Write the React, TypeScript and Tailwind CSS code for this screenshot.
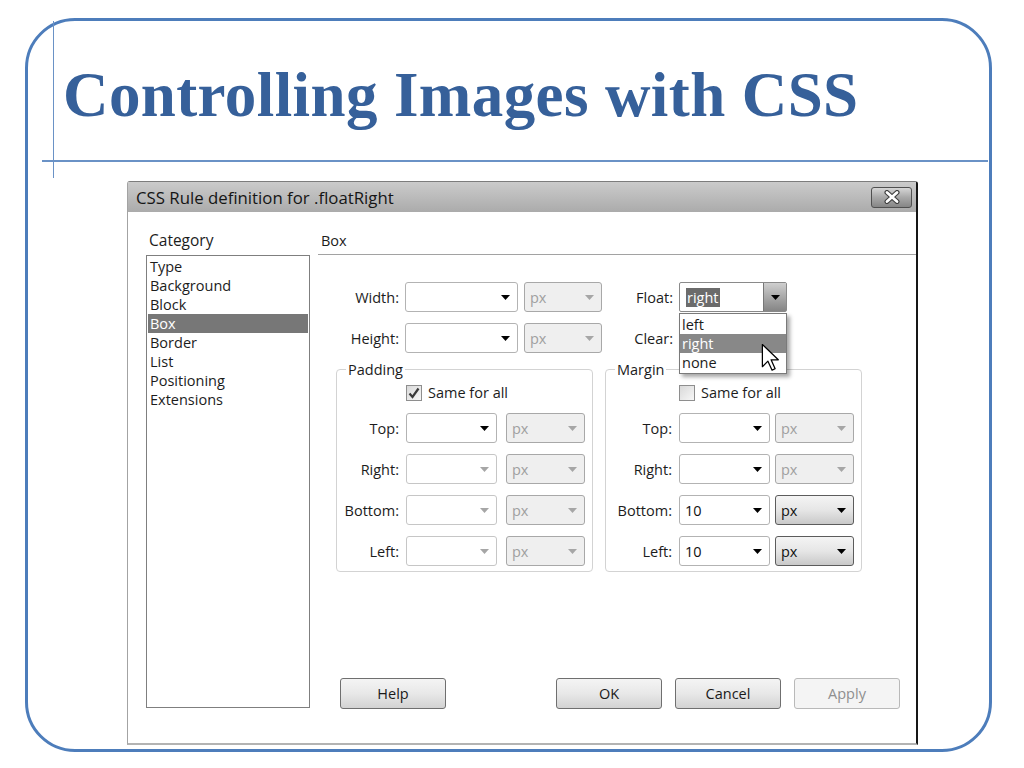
import { ReactNode } from 'react'
import { clsx } from 'clsx'

// ─── small pieces ─────────────────────────────────────────────────────────

function Arrow({ dim }: { dim?: boolean }) {
  return (
    <svg width="9" height="5" viewBox="0 0 9 5" className="shrink-0">
      <path d="M0 0h9L4.5 5z" fill={dim ? '#a6a6a6' : '#000'} />
    </svg>
  )
}

type Kind = 'open' | 'dim' | 'unit' | 'unitOn'

const kindStyles: Record<Kind, string> = {
  open: 'bg-white border-[#b3b3b3] text-[#111]',
  dim: 'bg-white border-[#c6c6c6] text-[#111]',
  unit: 'bg-[#efefef] border-[#a8a8a8] text-[#a0a0a0]',
  unitOn: 'bg-gradient-to-b from-[#f4f4f4] via-[#e6e6e6] to-[#c9c9c9] border-[#5c5c5c] text-[#111]',
}

function Combo({ kind, value, className }: { kind: Kind; value?: string; className: string }) {
  return (
    <div
      className={clsx(
        'flex h-[30px] shrink-0 items-center justify-between rounded-[3px] border pl-[5px] pr-[7px]',
        kindStyles[kind],
        className
      )}
    >
      <span>{value}</span>
      <Arrow dim={kind === 'dim' || kind === 'unit'} />
    </div>
  )
}

function Checkbox({ checked }: { checked?: boolean }) {
  return (
    <span className="flex h-[16px] w-[16px] items-center justify-center border border-[#8e8e8e] bg-gradient-to-br from-[#d9d9d9] to-[#f7f7f7]">
      {checked && (
        <svg width="12" height="12" viewBox="0 0 12 12">
          <path d="M1.5 6.5l3 3.5 6-8.5" fill="none" stroke="#3a3a3a" strokeWidth="2.2" />
        </svg>
      )}
    </span>
  )
}

function Btn({ children, disabled }: { children: ReactNode; disabled?: boolean }) {
  return (
    <div
      className={clsx(
        'flex h-[31px] w-[106px] items-center justify-center rounded-[3px] border',
        disabled
          ? 'border-[#b9b9b9] bg-[#f4f4f4] text-[#8f8f8f]'
          : 'border-[#6f6f6f] bg-gradient-to-b from-[#f4f4f4] via-[#e8e8e8] to-[#d2d2d2] text-[#1a1a1a]'
      )}
    >
      {children}
    </div>
  )
}

// ─── fieldset: Padding / Margin ───────────────────────────────────────────

interface SideRow {
  label: string
  kind: Kind
  value?: string
  unit: Kind
}

function SideBox({
  title,
  checked,
  rows,
  labelW,
  unitGap,
}: {
  title: string
  checked?: boolean
  rows: SideRow[]
  labelW: string
  unitGap: string
}) {
  return (
    <div className="relative h-[203px] w-[257px] rounded-[4px] border border-[#d3d3d3] pt-[13px]">
      <span className="absolute -top-[10px] left-[9px] bg-white px-[2px] leading-[19px]">{title}</span>
      <div className="flex h-[19px] items-center gap-[6px]">
        <span className={clsx('shrink-0', labelW)} />
        <span className="ml-[1px]">
          <Checkbox checked={checked} />
        </span>
        <span>Same for all</span>
      </div>
      <div className="mt-[11px] flex flex-col gap-[11px]">
        {rows.map(r => (
          <div key={r.label} className="flex items-center">
            <span className={clsx('shrink-0 text-right', labelW)}>{r.label}</span>
            <Combo kind={r.kind} value={r.value} className="ml-[7px] w-[91px]" />
            <Combo kind={r.unit} value="px" className={clsx('w-[79px]', unitGap)} />
          </div>
        ))}
      </div>
    </div>
  )
}

// ─── dialog ───────────────────────────────────────────────────────────────

const categories = ['Type', 'Background', 'Block', 'Box', 'Border', 'List', 'Positioning', 'Extensions']

function Dialog() {
  return (
    <div className="ml-[99px] mt-[54px] flex h-[564px] w-[791px] flex-col rounded-t-[3px] border-b-2 border-l border-r-2 border-t border-b-[#b3b3b3] border-l-[#a3a3a3] border-r-[#161616] border-t-[#7d7d7d] bg-white font-['Open_Sans',sans-serif] text-[14.5px] leading-[19px] text-[#1c1c1c]">
      {/* title bar */}
      <div className="flex h-[30px] items-center justify-between bg-gradient-to-b from-[#cbcbcb] to-[#ababab] pl-[8px] pr-[4px]">
        <span className="text-[16.8px] text-[#151515]">CSS Rule definition for .floatRight</span>
        <div className="flex h-[21px] w-[41px] items-center justify-center rounded-[3px] border border-[#505050] bg-gradient-to-b from-[#d6d6d6] via-[#a8a8a8] to-[#868686]">
          <svg width="20" height="14" viewBox="0 0 20 14">
            <path d="M5 2.5l10 9M15 2.5l-10 9" stroke="#3e3e3e" strokeWidth="5" strokeLinecap="round" />
            <path d="M5 2.5l10 9M15 2.5l-10 9" stroke="#fff" strokeWidth="2.8" strokeLinecap="round" />
          </svg>
        </div>
      </div>

      {/* body */}
      <div className="flex gap-[8px] pl-[18px] pt-[19px]">
        {/* category column */}
        <div className="w-[164px] shrink-0">
          <div className="pl-[3px] text-[15.5px]">Category</div>
          <div className="mt-[5px] h-[453px] border border-[#7f7f7f] px-[1px] pt-[1px]">
            {categories.map(c => (
              <div
                key={c}
                className={clsx('pl-[2px]', c === 'Box' ? 'bg-[#777777] text-white' : '')}
              >
                {c}
              </div>
            ))}
          </div>
        </div>

        {/* box panel */}
        <div className="flex flex-1 flex-col pr-[16px]">
          <div className="-mr-[16px] h-[24px] border-b border-[#a2a2a2] pl-[3px]">Box</div>

          <div className="mt-[27px] flex items-center">
            <span className="w-[81px] shrink-0 text-right">Width:</span>
            <Combo kind="open" className="ml-[6px] w-[113px]" />
            <Combo kind="unit" value="px" className="ml-[6px] w-[78px]" />
            <span className="w-[71px] shrink-0 text-right">Float:</span>
            <div className="relative ml-[6px]">
              <div className="flex h-[30px] w-[108px] items-stretch rounded-[2px] border border-[#8a8a8a] bg-white">
                <div className="flex flex-1 items-center pl-[6px]">
                  <span className="bg-[#6b6b6b] px-[1px] text-white">right</span>
                </div>
                <div className="flex w-[23px] items-center justify-center border-l border-[#777] bg-gradient-to-b from-[#cfcfcf] via-[#a9a9a9] to-[#858585]">
                  <Arrow />
                </div>
              </div>
              {/* open list */}
              <div className="absolute left-0 top-[31px] z-10 w-[108px] border border-[#7a7a7a] bg-white py-[1px] shadow-[3px_3px_4px_rgba(0,0,0,0.35)]">
                <div className="pl-[2px]">left</div>
                <div className="bg-[#888888] pl-[2px] text-white">right</div>
                <div className="pl-[2px]">none</div>
                <svg
                  width="18"
                  height="28"
                  viewBox="0 0 13 20"
                  className="absolute left-[81px] top-[29px]"
                >
                  <path
                    d="M1 1v16l4-4 3 6.5 2.2-1L7.3 12H12.5z"
                    fill="#fff"
                    stroke="#000"
                    strokeWidth="0.9"
                    strokeLinejoin="round"
                  />
                </svg>
              </div>
            </div>
          </div>

          <div className="mt-[11px] flex items-center">
            <span className="w-[81px] shrink-0 text-right">Height:</span>
            <Combo kind="open" className="ml-[6px] w-[113px]" />
            <Combo kind="unit" value="px" className="ml-[6px] w-[78px]" />
            <span className="w-[71px] shrink-0 text-right">Clear:</span>
            <Combo kind="open" className="ml-[6px] w-[108px]" />
          </div>

          <div className="ml-[18px] mt-[16px] flex gap-[12px]">
            <SideBox
              title="Padding"
              checked
              labelW="w-[62px]"
              unitGap="ml-[9px]"
              rows={[
                { label: 'Top:', kind: 'open', unit: 'unit' },
                { label: 'Right:', kind: 'dim', unit: 'unit' },
                { label: 'Bottom:', kind: 'dim', unit: 'unit' },
                { label: 'Left:', kind: 'dim', unit: 'unit' },
              ]}
            />
            <SideBox
              title="Margin"
              labelW="w-[66px]"
              unitGap="ml-[5px]"
              rows={[
                { label: 'Top:', kind: 'open', unit: 'unit' },
                { label: 'Right:', kind: 'open', unit: 'unit' },
                { label: 'Bottom:', kind: 'open', value: '10', unit: 'unitOn' },
                { label: 'Left:', kind: 'open', value: '10', unit: 'unitOn' },
              ]}
            />
          </div>

          <div className="mt-[106px] flex items-center pl-[22px]">
            <div className="w-[107px]">
              <Btn>Help</Btn>
            </div>
            <div className="ml-auto flex gap-[13px]">
              <Btn>OK</Btn>
              <Btn>Cancel</Btn>
              <Btn disabled>Apply</Btn>
            </div>
          </div>
        </div>
      </div>
    </div>
  )
}

// ─── slide ────────────────────────────────────────────────────────────────

export default function App() {
  return (
    <div className="h-[768px] w-[1024px] overflow-hidden bg-white pl-[25px] pt-[18px]">
      <div className="relative h-[734px] w-[967px] rounded-[50px] border-[3px] border-[#4d7dbb]">
        {/* theme rule lines */}
        <div className="absolute left-[25px] top-0 h-[157px] w-[1px] bg-[#6a92c6]" />
        <div className="absolute left-[14px] top-[139px] h-[2px] w-[946px] bg-[#6a92c6]" />

        <h1 className="ml-[35px] mt-[43px] font-['Liberation_Serif',serif] text-[63px] font-bold leading-[63px] tracking-[0.4px] text-[#36609a]">
          Controlling Images with CSS
        </h1>

        <Dialog />
      </div>
    </div>
  )
}
